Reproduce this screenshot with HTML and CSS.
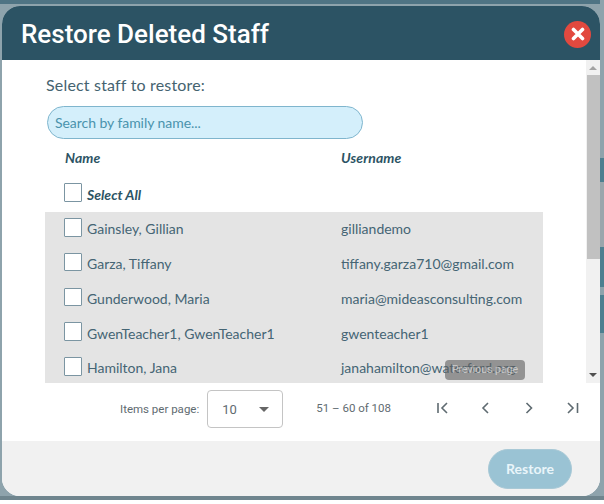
FILE: index.html
```html
<!DOCTYPE html>
<html lang="en">
<head>
<meta charset="utf-8">
<title>Restore Deleted Staff</title>
<link rel="stylesheet" href="styles.css">
</head>
<body>
<div class="backdrop">
  <section class="dialog">
    <header class="head">
      <h1 class="title">Restore Deleted Staff</h1>
      <button class="close" aria-label="Close">
        <svg width="14" height="14" viewBox="0 0 14 14"><path d="M2.5 2.5 11.5 11.5M11.5 2.5 2.5 11.5" stroke="#fff" stroke-width="3.6" stroke-linecap="round"/></svg>
      </button>
    </header>
    <div class="body">
      <div class="main">
        <p class="prompt">Select staff to restore:</p>
        <div class="search">Search by family name...</div>
        <div class="row heads"><span class="name-col">Name</span><span>Username</span></div>
        <div class="row all"><span class="name-col check-cell"><i class="box"></i><em>Select All</em></span></div>
        <div class="list">
          <div class="row item"><span class="name-col check-cell"><i class="box"></i>Gainsley, Gillian</span><span>gilliandemo</span></div>
          <div class="row item"><span class="name-col check-cell"><i class="box"></i>Garza, Tiffany</span><span>tiffany.garza710@gmail.com</span></div>
          <div class="row item"><span class="name-col check-cell"><i class="box"></i>Gunderwood, Maria</span><span>maria@mideasconsulting.com</span></div>
          <div class="row item"><span class="name-col check-cell"><i class="box"></i>GwenTeacher1, GwenTeacher1</span><span>gwenteacher1</span></div>
          <div class="row item"><span class="name-col check-cell"><i class="box"></i>Hamilton, Jana</span><span>janahamilton@waterford.org</span></div>
        </div>
      </div>
      <div class="scrollbar">
        <span class="arrow up"></span>
        <div class="track"><div class="thumb"></div></div>
        <span class="arrow down"></span>
      </div>
    </div>
    <div class="pager">
      <span class="per-label">Items per page:</span>
      <div class="select"><span>10</span><i class="caret"></i></div>
      <span class="range">51 – 60 of 108</span>
      <div class="nav">
        <svg width="16" height="16" viewBox="0 0 16 16"><path d="M4 3V13M13 3 8 8l5 5" fill="none" stroke="#5f6b71" stroke-width="1.6"/></svg>
        <svg width="16" height="16" viewBox="0 0 16 16"><path d="M10 3 5 8l5 5" fill="none" stroke="#5f6b71" stroke-width="1.6"/></svg>
        <svg width="16" height="16" viewBox="0 0 16 16"><path d="M5.5 3l5 5-5 5" fill="none" stroke="#5f6b71" stroke-width="1.6"/></svg>
        <svg width="16" height="16" viewBox="0 0 16 16"><path d="M3 3l5 5-5 5M12.5 3V13" fill="none" stroke="#5f6b71" stroke-width="1.6"/></svg>
      </div>
    </div>
    <footer class="foot"><button class="restore">Restore</button></footer>
    <div class="tooltip">Previous page</div>
  </section>
</div>
</body>
</html>
```
FILE: styles.css
```css
* { box-sizing: border-box; }
html, body { margin: 0; height: 100%; background: #fff; overflow: hidden; }
.backdrop {
  height: 500px;
  padding: 6px 4px 4px 2px;
  border-bottom: 4px solid #6f858e;
  background:
    linear-gradient(#8ea3ac 0 158px, #4d7f90 158px 182px, #9aa6ac 182px 247px, #4d7f90 247px 287px, #8ea3ac 287px 295px, #4d7f90 295px 333px, #8ea3ac 333px) right top / 4px 100% no-repeat,
    linear-gradient(#4f7484 0 4px, #8ea3ac 4px 100%);
}
.dialog { position: relative; height: 490px; display: flex; flex-direction: column; border-radius: 18px; overflow: hidden; background: #fff; font-family: "Lato", sans-serif; color: #456574; }
.head { height: 54px; flex: none; background: #2c5364; display: flex; align-items: center; justify-content: space-between; padding: 2px 9px 0 19px; }
.title { margin: 0; font: 500 26px/30px Roboto, sans-serif; color: #fff; }
.close { width: 27px; height: 27px; padding: 0; border: 0; border-radius: 50%; background: #e2493f; display: flex; align-items: center; justify-content: center; }
.body { flex: none; height: 323px; display: flex; }
.main { flex: 1; padding: 14px 43px 0 43px; overflow: hidden; }
.prompt { margin: 0 0 10px 1px; font-size: 16px; line-height: 22px; letter-spacing: .18px; color: #456370; }
.search { width: 316px; height: 33px; margin-left: 2px; padding-left: 7px; border: 1px solid #7fb5cd; border-radius: 17px; background: #d4effb; color: #4a93ad; font-size: 14px; line-height: 31px; letter-spacing: -.05px; }
.row { display: flex; align-items: center; height: 34.75px; padding-left: 19px; font-size: 14px; }
.name-col { width: 277px; flex: none; }
.heads { height: 37px; padding-left: 20px; font-weight: 700; font-style: italic; font-size: 14px; color: #2c5364; letter-spacing: .1px; }
.heads .name-col { width: 276px; }
.all { height: 36px; }
.all em { font-weight: 700; font-size: 14px; color: #2c5364; }
.list { background: #e4e4e4; height: 171px; }
.item { padding-bottom: 1px; }
.check-cell { display: flex; align-items: center; gap: 5px; }
.box { width: 18px; height: 18.5px; flex: none; margin-top: -3px; border: 1px solid #7b95a2; background: #fff; border-radius: 1px; }
.scrollbar { width: 14px; flex: none; background: #f1f1f1; display: flex; flex-direction: column; align-items: center; }
.arrow { width: 0; height: 0; flex: none; margin: 6px 0 5px; border-left: 4px solid transparent; border-right: 4px solid transparent; }
.up { border-bottom: 4px solid #a3a3a3; }
.down { border-top: 4px solid #505050; margin: 5px 0 6px; }
.track { flex: 1; width: 100%; padding-left: 1px; }
.thumb { height: 184px; background: #c1c1c1; }
.pager { flex: none; height: 58px; display: flex; align-items: center; color: #5f6b71; padding: 0 0 6px 118px; }
.per-label { font: 11.5px Roboto, sans-serif; margin-right: 8px; }
.select { width: 76px; height: 38px; border: 1px solid #c4c4c4; border-radius: 4px; display: flex; align-items: center; justify-content: space-between; padding: 0 13px 0 14px; font: 13px Roboto, sans-serif; }
.caret { width: 0; height: 0; border-left: 5px solid transparent; border-right: 5px solid transparent; border-top: 5px solid #666; }
.range { font: 11.5px Roboto, sans-serif; margin: -3px 0 0 33px; width: 118px; }
.nav { display: flex; gap: 27.5px; margin-top: -2px; }
.foot { flex: 1; background: #f1f1f1; display: flex; align-items: center; justify-content: flex-end; padding: 0 28px 0 0; }
.restore { width: 84px; height: 40px; border: 1px solid #a9c9d6; border-radius: 20px; background: #9ac3d4; color: #e9f5fa; font: 700 14px "Lato", sans-serif; }
.tooltip { position: absolute; left: 443px; top: 354px; width: 80px; height: 20px; border-radius: 4px; background: rgba(97,97,97,.62); color: rgba(235,235,235,.65); font: 10.5px/20px Roboto, sans-serif; text-align: center; }
```
